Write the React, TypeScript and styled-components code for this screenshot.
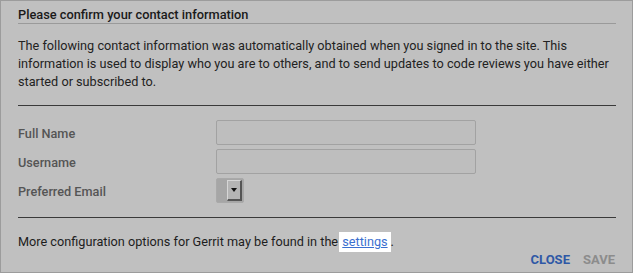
import React from "react";
import styled, { createGlobalStyle } from "styled-components";

const Global = createGlobalStyle`
  html, body { margin: 0; padding: 0; background: #c0c0c0; }
  body { font-family: Roboto, "Noto Sans", Arial, sans-serif; }
`;

const Dialog = styled.div`
  box-sizing: border-box;
  width: 633px;
  height: 273px;
  border: 1px solid #9c9c9c;
  background: #c0c0c0;
  padding: 0 16px 0 17px;
  display: flex;
  flex-direction: column;
  color: #1d1d1d;
  font-size: 12.7px;
`;

const Header = styled.h1`
  margin: 0;
  padding: 6px 0 1px;
  font-size: 12.8px;
  line-height: 15px;
  font-weight: 500;
  color: #1a1a1a;
  border-bottom: 1px solid #9a9a9a;
`;

const Intro = styled.p`
  margin: 13px 0 0;
  line-height: 18px;
  color: #222;
`;

const Rule = styled.hr<{ $top: number }>`
  margin: ${(p) => p.$top}px 0 0;
  border: 0;
  border-top: 1px solid #3a3a3a;
  height: 0;
`;

const Form = styled.div`
  display: grid;
  grid-template-columns: 198px auto;
  row-gap: 4px;
  margin-top: 14px;
  justify-content: start;
`;

const Label = styled.label`
  display: block;
  height: 25px;
  font-weight: 500;
  color: #555;
  line-height: 27px;
`;

const Input = styled.div`
  box-sizing: border-box;
  width: 260px;
  height: 25px;
  border: 1px solid #a2a2a2;
  border-radius: 2px;
  background: #bebebe;
`;

const Select = styled.div`
  box-sizing: border-box;
  width: 28px;
  height: 25px;
  border: 1px solid #a9a9a9;
  border-radius: 2px;
  background: #a6a6a6;
  display: flex;
  justify-content: flex-end;
  padding: 1px;
`;

const SelectButton = styled.div`
  box-sizing: border-box;
  width: 15px;
  height: 100%;
  background: #b4b4b4;
  border-top: 1px solid #d6d6d6;
  border-left: 1px solid #d6d6d6;
  border-right: 2px solid #555;
  border-bottom: 2px solid #555;
  display: flex;
  align-items: center;
  justify-content: center;
`;

const Arrow = styled.div`
  width: 0;
  height: 0;
  border-left: 3px solid transparent;
  border-right: 3px solid transparent;
  border-top: 4px solid #111;
`;

const Note = styled.p`
  margin: 14px 0 0;
  line-height: 20px;
  color: #1d1d1d;
`;

const Link = styled.a`
  background: #fff;
  color: #3b6fd0;
  text-decoration: underline;
  padding: 0 3px 0 3px;
  margin-left: -2px;
  display: inline-block;
`;

const Actions = styled.div`
  display: flex;
  justify-content: flex-end;
  gap: 13px;
  margin-top: 0;
  padding-right: 1px;
`;

const Action = styled.button<{ $disabled?: boolean }>`
  background: none;
  border: 0;
  padding: 0;
  font-family: inherit;
  font-size: 13px;
  font-weight: 700;
  line-height: 16px;
  color: ${(p) => (p.$disabled ? "#8c8c8c" : "#2f58a6")};
`;

export default function App() {
  return (
    <>
      <Global />
      <Dialog>
        <Header>Please confirm your contact information</Header>
        <Intro>
          The following contact information was automatically obtained when you signed in to the site. This
          information is used to display who you are to others, and to send updates to code reviews you have either
          started or subscribed to.
        </Intro>
        <Rule $top={14} />
        <Form>
          <Label>Full Name</Label>
          <Input />
          <Label>Username</Label>
          <Input />
          <Label>Preferred Email</Label>
          <Select>
            <SelectButton>
              <Arrow />
            </SelectButton>
          </Select>
        </Form>
        <Rule $top={14} />
        <Note>
          More configuration options for Gerrit may be found in the <Link>settings</Link>.
        </Note>
        <Actions>
          <Action>CLOSE</Action>
          <Action $disabled>SAVE</Action>
        </Actions>
      </Dialog>
    </>
  );
}
